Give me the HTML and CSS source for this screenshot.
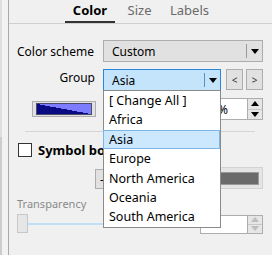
FILE: index.html
```html
<!DOCTYPE html>
<html>
<head>
<meta charset="utf-8">
<link rel="stylesheet" href="styles.css">
</head>
<body>
<div class="app">
  <div class="strip"></div>
  <div class="gutter"></div>
  <div class="panel">
    <div class="tabs">
      <div class="tab t1 active">Color</div>
      <div class="tab t2">Size</div>
      <div class="tab t3">Labels</div>
    </div>
    <div class="body">
      <div class="row r1">
        <span class="lbl">Color scheme</span>
        <div class="combo c1"><span class="val">Custom</span><span class="drop"><svg width="8" height="5" viewBox="0 0 8 5"><path d="M0 0H8L4 5Z" fill="#000"/></svg></span></div>
      </div>
      <div class="row r2">
        <span class="lbl">Group</span>
        <div class="combo c2"><span class="val">Asia</span><span class="drop"><svg width="8" height="5" viewBox="0 0 8 5"><path d="M0 0H8L4 5Z" fill="#000"/></svg></span></div>
        <button class="nav">&lt;</button>
        <button class="nav">&gt;</button>
      </div>
      <div class="row r3">
        <div class="swatch-btn"><div class="swatch"></div></div>
        <div class="spin">
          <span class="spin-text">%</span>
          <div class="spin-btns">
            <span class="sb"><svg width="8" height="5" viewBox="0 0 8 5"><path d="M0 5H8L4 0Z" fill="#000"/></svg></span>
            <span class="sb"><svg width="8" height="5" viewBox="0 0 8 5"><path d="M0 0H8L4 5Z" fill="#000"/></svg></span>
          </div>
        </div>
      </div>
      <div class="sep"></div>
      <div class="row r4">
        <span class="check"></span>
        <span class="bold">Symbol border</span>
      </div>
      <div class="row r5">
        <button class="minus">-</button>
        <div class="darkbox"><div class="dark"></div></div>
      </div>
      <div class="trans">Transparency</div>
      <div class="row r6">
        <div class="slider"><div class="thumb"></div><div class="track"></div></div>
        <div class="spin s2">
          <span class="spin-text"></span>
          <div class="spin-btns">
            <span class="sb"><svg width="8" height="5" viewBox="0 0 8 5"><path d="M0 5H8L4 0Z" fill="#bdbdbd"/></svg></span>
            <span class="sb"><svg width="8" height="5" viewBox="0 0 8 5"><path d="M0 0H8L4 5Z" fill="#bdbdbd"/></svg></span>
          </div>
        </div>
      </div>
    </div>
    <ul class="list">
      <li>[ Change All ]</li>
      <li>Africa</li>
      <li class="sel">Asia</li>
      <li>Europe</li>
      <li>North America</li>
      <li>Oceania</li>
      <li>South America</li>
    </ul>
  </div>
</div>
</body>
</html>
```

FILE: styles.css
```css
* { box-sizing: border-box; }
html, body {
  margin: 0;
  padding: 0;
  width: 272px;
  height: 255px;
  overflow: hidden;
  background: #f0f0f0;
  font-family: "Noto Sans", "Open Sans", sans-serif;
  font-size: 12px;
  color: #000;
}
.app {
  display: flex;
  height: 255px;
}
.strip {
  width: 2px;
  background: linear-gradient(to bottom, #dedede 0, #dedede 137px, #cdcdcd 137px);
}
.gutter {
  width: 6px;
  background: #f2f2f2;
}
.panel {
  position: relative;
  flex: 1;
  border-left: 1px solid #a9a9a9;
  display: flex;
  flex-direction: column;
}
.tabs {
  display: flex;
  height: 24px;
  border-bottom: 1px solid #cfcfcf;
  padding-left: 56px;
}
.tab {
  height: 23px;
  text-align: center;
  font-size: 13px;
  line-height: 20px;
  color: #6a6a6a;
}
.t1 { width: 50px; }
.t2 { width: 49px; }
.t3 { width: 51px; }
.tab.active {
  color: #000;
  font-weight: bold;
  border-bottom: 2px solid #333;
  height: 23px;
}
.body {
  display: flex;
  flex-direction: column;
  padding: 0 9px 0 8px;
}
.row {
  display: flex;
  align-items: center;
}
.lbl {
  width: 78px;
  margin-right: 8px;
  text-align: right;
  white-space: nowrap;
}
.r1 { margin-top: 16px; height: 22px; }
.r1 .lbl { text-align: left; }
.combo {
  height: 22px;
  display: flex;
  align-items: center;
  border: 1px solid #adadad;
  background: #e1e1e1;
}
.combo .val {
  flex: 1;
  padding-left: 8px;
}
.combo .drop {
  width: 16px;
  height: 14px;
  border-left: 1px solid #9a9a9a;
  display: flex;
  align-items: center;
  justify-content: center;
}
.c1 { width: 160px; }
.r2 { margin-top: 7px; height: 22px; align-items: flex-start; }
.c2 {
  width: 118px;
  background: #c4e4fb;
  border-color: #2b86d9;
}
.c2 .drop { border-left-color: #5a8fbf; }
.nav {
  width: 17px;
  height: 21px;
  margin: 0 0 0 5px;
  padding: 0;
  border: 1px solid #adadad;
  background: #e1e1e1;
  font-family: "Noto Sans", sans-serif;
  font-size: 10px;
  color: #333;
  line-height: 18px;
}
.nav + .nav { margin-left: 3px; }
.r3 {
  margin-top: 7px;
  height: 22px;
  justify-content: space-between;
}
.swatch-btn {
  margin-left: 15px;
  width: 64px;
  height: 16px;
  border: 1px solid #adadad;
  background: #e1e1e1;
  padding: 1px 3px 0 3px;
}
.swatch {
  width: 56px;
  height: 12px;
  border: 1px solid #4a4a6a;
  background: linear-gradient(to top right, #0a0a82 50%, #7c7cff 50%);
}
.spin {
  flex: 0 0 63px;
  width: 63px;
  height: 22px;
  display: flex;
  border: 1px solid #adadad;
  background: #fff;
}
.spin-text {
  flex: 1;
  min-width: 0;
  display: flex;
  align-items: center;
  justify-content: flex-end;
  padding-right: 19px;
  font-size: 12px;
}
.spin-btns {
  flex: 0 0 15px;
  display: flex;
  flex-direction: column;
  border-left: 1px solid #adadad;
  background: #e6e6e6;
}
.sb {
  flex: 1;
  display: flex;
  align-items: center;
  justify-content: center;
}
.sb + .sb { border-top: 1px solid #c8c8c8; }
.sep {
  margin: 11px 8px 0 8px;
  height: 1px;
  background: #d5d5d5;
}
.r4 { margin-top: 11px; height: 14px; }
.check {
  width: 14px;
  height: 14px;
  margin-left: 1px;
  border: 1px solid #333;
  background: #fff;
}
.bold {
  margin-left: 6px;
  width: 66px;
  overflow: hidden;
  font-weight: bold;
  font-size: 13px;
  white-space: nowrap;
}
.r5 {
  margin-top: 10px;
  height: 22px;
  justify-content: space-between;
}
.minus {
  margin: 2px 0 0 78px;
  width: 40px;
  height: 20px;
  padding: 0 0 0 4px;
  text-align: left;
  border: 1px solid #adadad;
  background: #e1e1e1;
  font-family: "Noto Sans", sans-serif;
  font-size: 12px;
}
.darkbox {
  width: 60px;
  height: 22px;
  border: 1px solid #d3d3d3;
  background: #e4e4e4;
  padding: 4px 3px 3px 3px;
}
.dark {
  height: 13px;
  background: #6a6a6a;
  border: 1px solid #9a9a9a;
}
.trans {
  margin-top: 8px;
  font-size: 11px;
  line-height: 14px;
  color: #8a8a8a;
}
.r6 {
  margin-top: 3px;
  height: 20px;
  justify-content: space-between;
}
.slider {
  position: relative;
  width: 120px;
  height: 20px;
}
.thumb {
  position: absolute;
  left: 0;
  top: 0;
  width: 11px;
  height: 19px;
  border: 1px solid #c8c8c8;
  background: #e6e6e6;
  z-index: 1;
}
.track {
  position: absolute;
  left: 5px;
  right: 0;
  top: 9px;
  height: 2px;
  background: #bfe1f8;
}
.s2 { height: 19px; }
.list {
  position: absolute;
  left: 94px;
  top: 90px;
  width: 118px;
  height: 138px;
  margin: 0;
  padding: 0;
  list-style: none;
  background: #fff;
  border: 1px solid #8a8a8a;
  z-index: 5;
}
.list li {
  height: 19.4px;
  line-height: 19.4px;
  padding-left: 5px;
  white-space: nowrap;
  font-size: 12.5px;
}
.list li.sel {
  background: #cce8ff;
  outline: 1px solid #7ab7e8;
  outline-offset: -1px;
  margin-left: -1px;
  padding-left: 6px;
}
```
